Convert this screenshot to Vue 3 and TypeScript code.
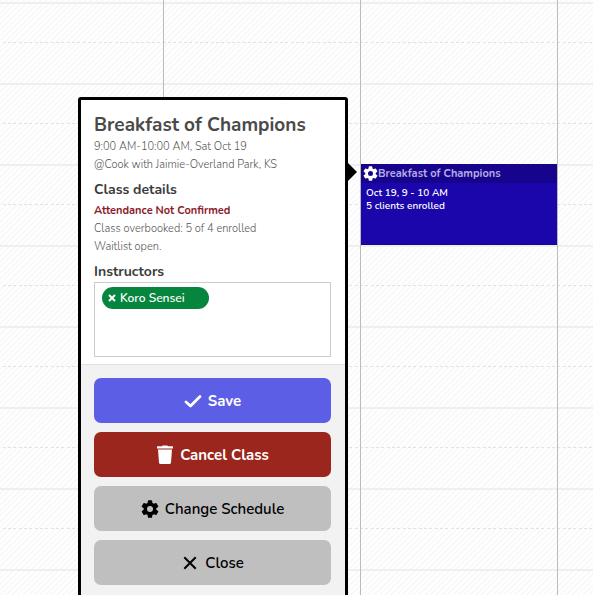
<script setup lang="ts">
import { ref } from 'vue'

interface Action {
  label: string
  icon: 'check' | 'trash' | 'gear' | 'close'
  tone: 'primary' | 'danger' | 'neutral'
}

const gearPath =
  'M19.4 13a7.8 7.8 0 0 0 0-2l2.3-1.8a.9.9 0 0 0 .2-1.1l-2.2-3.8a.9.9 0 0 0-1-.4l-2.8 1.1a8 8 0 0 0-1.7-1L13.8 1.1a.9.9 0 0 0-.9-.8H9.1a.9.9 0 0 0-.9.8L7.8 4a8 8 0 0 0-1.7 1L3.3 3.9a.9.9 0 0 0-1 .4L.1 8.1a.9.9 0 0 0 .2 1.1L2.6 11a7.8 7.8 0 0 0 0 2L.3 14.8a.9.9 0 0 0-.2 1.1l2.2 3.8a.9.9 0 0 0 1 .4L6.1 19a8 8 0 0 0 1.7 1l.4 2.9a.9.9 0 0 0 .9.8h3.8a.9.9 0 0 0 .9-.8l.4-2.9a8 8 0 0 0 1.7-1l2.8 1.1a.9.9 0 0 0 1-.4l2.2-3.8a.9.9 0 0 0-.2-1.1zM11 16a4 4 0 1 1 0-8 4 4 0 0 1 0 8z'

const actions: Action[] = [
  { label: 'Save', icon: 'check', tone: 'primary' },
  { label: 'Cancel Class', icon: 'trash', tone: 'danger' },
  { label: 'Change Schedule', icon: 'gear', tone: 'neutral' },
  { label: 'Close', icon: 'close', tone: 'neutral' },
]

const hours = 8
const instructors = ref<string[]>(['Koro Sensei'])

function removeInstructor(name: string) {
  instructors.value = instructors.value.filter((n) => n !== name)
}
</script>

<template>
  <main class="calendar">
    <div class="hours" aria-hidden="true">
      <div v-for="h in hours" :key="h" class="hour"></div>
    </div>
    <div class="days">
      <div class="day"></div>
      <div class="day"></div>
      <div class="day booked">
        <article class="event">
          <header class="event-head">
            <svg class="event-gear" viewBox="-1 0 24 24"><path :d="gearPath" fill-rule="evenodd" /></svg>
            <span class="event-title">Breakfast of Champions</span>
          </header>
          <div class="event-body">
            <div>Oct 19, 9 - 10 AM</div>
            <div>5 clients enrolled</div>
          </div>
        </article>

        <section class="popup">
          <div class="details">
            <h1>Breakfast of Champions</h1>
            <p>9:00 AM-10:00 AM, Sat Oct 19</p>
            <p>@Cook with Jaimie-Overland Park, KS</p>
            <h2>Class details</h2>
            <p class="warning">Attendance Not Confirmed</p>
            <p>Class overbooked: 5 of 4 enrolled</p>
            <p>Waitlist open.</p>
            <h2 id="instructors" class="picker-label">Instructors</h2>
            <div class="picker" role="group" aria-labelledby="instructors">
              <button v-for="name in instructors" :key="name" type="button" class="tag" @click="removeInstructor(name)">
                <svg class="tag-x" viewBox="0 0 8 8"><path d="M1 1l6 6M7 1l-6 6" /></svg>
                <span>{{ name }}</span>
              </button>
            </div>
          </div>
          <div class="actions">
            <button v-for="a in actions" :key="a.label" type="button" class="action" :class="a.tone">
              <svg v-if="a.icon === 'check'" class="icon" viewBox="0 0 18 18">
                <path d="M2 10l4.5 4L16 4.5" fill="none" stroke="currentColor" stroke-width="2.8" stroke-linecap="round" stroke-linejoin="round" />
              </svg>
              <svg v-else-if="a.icon === 'trash'" class="icon trash" viewBox="0 0 18 20">
                <path d="M6 1.2Q6.2.5 7 .5h4q.8 0 1 .7h4.5q.5 0 .5.5v1.800H1V1.700q0-.5.5-.5zM2 4.500h14l-1 13q-.1 1.500-1.600 1.500H4.600Q3.100 19 3 17.500z" fill="currentColor" />
              </svg>
              <svg v-else-if="a.icon === 'gear'" class="icon" viewBox="-1 0 24 24"><path :d="gearPath" fill="currentColor" fill-rule="evenodd" /></svg>
              <svg v-else class="icon" viewBox="0 0 18 18">
                <path d="M4 4l10 10M14 4L4 14" fill="none" stroke="currentColor" stroke-width="2" stroke-linecap="square" />
              </svg>
              <span>{{ a.label }}</span>
            </button>
          </div>
        </section>
      </div>
      <div class="day"></div>
    </div>
  </main>
</template>

<style>
body {
  margin: 0;
}
</style>

<style scoped>
.calendar {
  box-sizing: border-box;
  position: relative;
  display: grid;
  height: 100vh;
  overflow: hidden;
  font-family: Nunito, Lato, 'Open Sans', sans-serif;
  background: repeating-linear-gradient(-45deg, #fff 0 2px, #f9f9f9 2px 4px);
}
.hours,
.days {
  grid-area: 1 / 1;
  min-height: 0;
}
.hours {
  padding-top: 2px;
}
.hour {
  box-sizing: border-box;
  height: 81px;
  border-top: 2px solid #efefef;
}
.hour::before {
  content: '';
  display: block;
  height: 1px;
  margin: 38px 0 0 3px;
  background: repeating-linear-gradient(
    90deg,
    #e2e2e2 0 3px,
    transparent 3px 5px,
    #e2e2e2 5px 8px,
    transparent 8px 10px,
    #e2e2e2 10px 13px,
    transparent 13px 16px
  );
}
.days {
  display: grid;
  grid-template-columns: 164fr 197fr 197fr 35fr;
}
.day {
  border-right: 1px solid #bbb;
}
.day:last-child {
  border-right: 0;
}
.booked {
  position: relative;
  padding-top: 164px;
}
.event {
  box-sizing: border-box;
  height: 81px;
  border-bottom: 1px solid #17048d;
  background: #1a06ab;
  color: #fff;
}
.event-head {
  display: flex;
  align-items: center;
  height: 19px;
  padding-left: 2px;
  background: #17048d;
}
.event-gear {
  width: 15px;
  height: 15px;
  fill: #fff;
}
.event-title {
  color: #b5aee2;
  font-size: 11px;
  font-weight: 700;
  line-height: 19px;
}
.event-body {
  padding: 4px 5px;
  font-size: 10px;
  font-weight: 600;
  line-height: 13px;
}
.popup {
  position: absolute;
  top: 97px;
  right: calc(100% + 13px);
  box-sizing: border-box;
  width: 270px;
  border: 3px solid #000;
  border-radius: 3px;
  background: #f2f2f2;
}
.popup::after {
  content: '';
  position: absolute;
  top: 63px;
  left: 100%;
  margin-left: 3px;
  border: 9px solid transparent;
  border-right: 0;
  border-left-color: #000;
}
.details {
  padding: 12px 14px 7px 13px;
  border-bottom: 1px solid #e1e1e1;
  background: #fff;
}
h1 {
  margin: 0;
  color: #4a4a4a;
  font-size: 19px;
  font-weight: 700;
  line-height: 26px;
  white-space: nowrap;
}
h2 {
  margin: 6px 0 2px;
  color: #3c3c3c;
  font-size: 14px;
  font-weight: 700;
  line-height: 20px;
}
.picker-label {
  margin-bottom: 0;
}
p {
  margin: 0;
  color: #555;
  font-size: 11px;
  font-weight: 300;
  line-height: 18px;
  white-space: nowrap;
}
.warning {
  color: #8b1a2b;
  font-weight: 700;
}
.picker {
  box-sizing: border-box;
  min-height: 75px;
  padding: 4px 7px;
  border: 1px solid #ccc;
}
.tag {
  display: flex;
  align-items: center;
  gap: 4px;
  height: 22px;
  padding: 0 24px 0 6px;
  border: 0;
  border-radius: 11px;
  background: #05853d;
  color: #fff;
  font: inherit;
  font-size: 12px;
  font-weight: 600;
}
.tag-x {
  width: 8px;
  height: 8px;
  fill: none;
  stroke: #fff;
  stroke-width: 2;
}
.actions {
  display: grid;
  gap: 9px;
  padding: 13px 14px 14px 13px;
}
.action {
  display: flex;
  align-items: center;
  justify-content: center;
  gap: 6px;
  height: 45px;
  border: 0;
  border-radius: 7px;
  font: inherit;
  font-size: 15px;
  font-weight: 600;
}
.primary {
  background: #5c5ee6;
  color: #fff;
  font-weight: 700;
}
.danger {
  background: #9b261d;
  color: #fff;
  font-weight: 700;
}
.neutral {
  background: #bfbfbf;
  color: #000;
}
.icon {
  width: 18px;
  height: 18px;
}
.trash {
  height: 20px;
}
</style>
